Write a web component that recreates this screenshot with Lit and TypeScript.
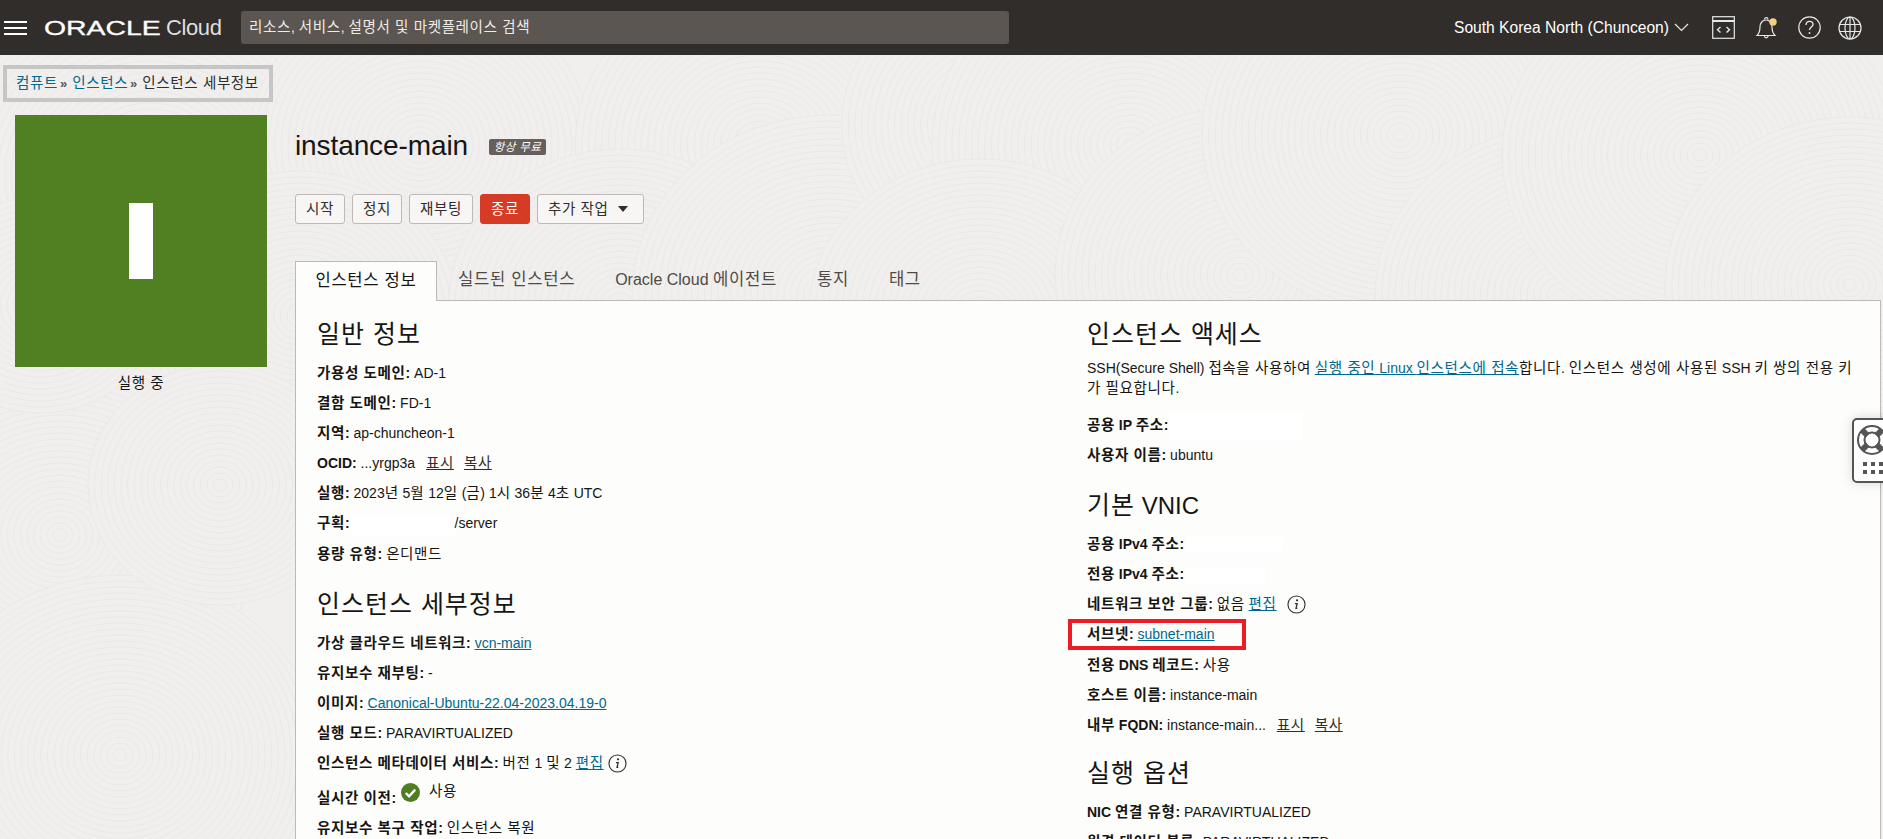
import { LitElement, html, css, svg } from "lit";
import { customElement } from "lit/decorators.js";

// Hangul runs get their own span: the CJK font's syllables are narrower than the reference's.
const k = (text: string) =>
  text.split(/([가-힣]+(?:\s+[가-힣]+)*)/).map((part, i) => (i % 2 ? html`<span class="ko">${part}</span>` : part));

const seeds: [number, number, number][] = [
  [150, 120, 34], [60, 480, 30], [420, 90, 26], [300, 260, 24], [760, 90, 28], [620, 250, 26], [830, 240, 30],
  [1000, 70, 24], [1130, 90, 30], [980, 260, 26], [1240, 220, 28], [1400, 80, 30], [1560, 240, 28], [1700, 100, 30],
  [1850, 230, 28], [120, 700, 30], [220, 430, 20], [40, 250, 18],
];
const texture = seeds.map(([cx, cy, n]) =>
  Array.from({ length: n }, (_, i) => {
    const r = (n - i) * 6;
    return svg`<ellipse cx=${cx} cy=${cy} rx=${r * 1.1} ry=${r} />`;
  })
);

const info = html`<svg class="info" viewBox="0 0 20 20"><circle cx="10" cy="10" r="9" fill="none" stroke="#333" stroke-width="1.2"/><circle cx="10.6" cy="5.6" r="1.2" fill="#333"/><path d="M8.4 9h2.3l-1.2 5h1.4" fill="none" stroke="#333" stroke-width="1.4"/></svg>`;

@customElement("app-root")
export class AppRoot extends LitElement {
  static styles = css`
    :host { display: block; position: relative; width: 1883px; height: 839px; overflow: hidden; background: #f0efed; font-family: "Liberation Sans", "Noto Sans CJK KR", sans-serif; font-size: 14px; color: #161513; }
    .ko { font-size: 1.04em; letter-spacing: .041em; }
    a { color: #00688c; text-decoration: underline; }
    .texture { position: absolute; left: 0; top: 55px; width: 1883px; height: 784px; fill: #f0efed; stroke: #ebe9e7; stroke-width: 1; }
    header { position: relative; height: 55px; background: #312d2a; color: #fff; display: flex; align-items: center; box-sizing: border-box; padding-left: 4px; }
    .burger { width: 23px; height: 14px; display: flex; flex-direction: column; justify-content: space-between; margin-top: 1px; }
    .burger i { display: block; height: 2px; background: #fff; }
    .logo { margin-left: 17px; width: 180px; display: flex; align-items: baseline; white-space: nowrap; color: #fff; }
    .logo b { font-weight: 400; font-size: 20px; transform: scaleX(1.42); transform-origin: left; width: 122px; -webkit-text-stroke: 0.3px #fff; }
    .logo span { font-size: 22px; letter-spacing: -0.4px; color: #dedede; }
    .search { margin-left: 17px; width: 768px; height: 33px; background: #5b5652; border-radius: 3px; box-sizing: border-box; padding-left: 8px; line-height: 33px; color: #efece8; }
    .region { margin-left: auto; font-size: 15.6px; white-space: nowrap; }
    .chev { margin-left: 5px; width: 15px; height: 9px; }
    .hicons { display: flex; align-items: center; margin-left: 23px; width: 171px; flex: none; }
    .hicons svg { flex: none; fill: none; stroke: #e8e8e8; stroke-width: 1.2; }
    .hicons .bell { margin-left: 21px; }
    .hicons .q { margin-left: 21px; }
    .hicons .globe { margin-left: 17px; }
    main { position: relative; }
    .crumb { position: absolute; left: 3px; top: 10px; width: 270px; height: 37px; box-sizing: border-box; border: 4px solid #c6c6c6; padding-left: 9px; line-height: 28px; white-space: nowrap; color: #312d2a; }
    .crumb a { text-decoration: none; }
    .crumb .sep { font-size: 13px; font-weight: 700; margin: 0 5px 0 2px; color: #555; }
    .layout { display: flex; padding: 60px 2px 0 15px; }
    .side { width: 252px; flex: none; margin-right: 28px; }
    .tile { height: 252px; background: #518023; display: flex; align-items: center; justify-content: center; }
    .tile i { display: block; width: 24px; height: 76px; background: #fff; }
    .status { text-align: center; margin-top: 7px; line-height: 18px; }
    .body { flex: 1; min-width: 0; }
    .title { display: flex; align-items: center; height: 60px; padding-top: 1px; box-sizing: border-box; }
    h1 { margin: 0; font-weight: 400; font-size: 28px; letter-spacing: -0.1px; }
    .badge { margin-left: 21px; background: #665f5b; color: #fff; font-size: 11px; height: 16px; line-height: 16px; width: 57px; text-align: center; border-radius: 2px; font-style: italic; margin-top: 2px; white-space: nowrap; }
    .btns { display: flex; gap: 7px; margin-top: 19px; }
    .btn { box-sizing: border-box; height: 30px; line-height: 28px; border: 1px solid #bcb9b6; border-radius: 3px; background: #f7f6f5; text-align: center; color: #312d2a; width: 50px; white-space: nowrap; }
    .btn.w { width: 64px; }
    .btn.danger { background: #d63b25; border-color: #d63b25; color: #fff; }
    .btn.more { width: 107px; text-align: left; padding-left: 10px; }
    .caret { display: inline-block; border: 5px solid transparent; border-top: 6px solid #312d2a; border-bottom: 0; margin-left: 9px; vertical-align: 2px; }
    .tabs { display: flex; margin-top: 37px; height: 39px; font-size: 16px; color: #4f4a46; position: relative; z-index: 1; }
    .tab { line-height: 38px; white-space: nowrap; margin-left: 40px; }
    .tab.first { margin-left: 21px; }
    .tab.active { margin: 0; width: 142px; box-sizing: border-box; height: 40px; border: 1px solid #bcb9b6; border-bottom: 0; background: #fdfdfb; text-align: center; color: #161513; }
    .panel { border: 1px solid #bcb9b6; background: #fdfdfb; height: 560px; box-sizing: border-box; padding: 13px 22px 0 21px; display: grid; grid-template-columns: 770px 1fr; }
    h2 { margin: 0 0 4px; font-weight: 400; font-size: 24px; line-height: 40px; height: 40px; color: #161513; white-space: nowrap; }
    .row { height: 30.1px; line-height: 30px; white-space: nowrap; }
    .row a { margin-right: 10px; }
    .row a.mono { color: #312d2a; }
    .row a.first { margin-left: 7px; }
    .row a.edit { margin-right: 4px; }
    .row.tall { height: 35px; padding-top: 5px; box-sizing: border-box; }
    .mask { display: inline-block; background: #fff; vertical-align: middle; }
    .m1 { width: 105px; height: 20px; margin: 0 -1px 0 -3px; }
    .m2 { width: 132px; height: 29px; margin-left: 2px; }
    .m3 { width: 97px; height: 16px; margin-left: 2px; }
    .m4 { width: 79px; height: 16px; margin-left: 2px; }
    .info { width: 19px; height: 19px; vertical-align: -5px; }
    .check { width: 19px; height: 19px; vertical-align: 1px; margin: 0 4px 0 1px; }
    .up { position: relative; top: -7px; margin-left: 5px; }
    .s2 { margin-top: 15px; }
    .para { line-height: 20px; height: 40px; margin: 0 0 12px; width: 770px; }
    .s3 { margin-top: 15px; }
    .s4 { margin-top: 13px; }
    .boxed { outline: 4px solid #ed1c24; outline-offset: -4px; margin-left: -19px; padding-left: 19px; width: 159px; }
    .help { position: absolute; left: 1852px; top: 418px; width: 40px; height: 65px; box-sizing: border-box; border: 2px solid #555; border-radius: 5px; background: #fff; box-shadow: 0 0 12px rgba(0,0,0,.15); }
    .help svg { display: block; }
  `;

  render() {
    return html`
      <svg class="texture">${texture}</svg>
      <header>
        <div class="burger"><i></i><i></i><i></i></div>
        <div class="logo"><b>ORACLE</b><span>Cloud</span></div>
        <div class="search">${k("리소스, 서비스, 설명서 및 마켓플레이스 검색")}</div>
        <div class="region">South Korea North (Chunceon)</div>
        <svg class="chev" viewBox="0 0 15 9" fill="none" stroke="#e8e8e8" stroke-width="1.2"><path d="M1 1l6.5 6.5L14 1"/></svg>
        <div class="hicons">
          <svg width="23" height="23" viewBox="0 0 23 23"><rect x=".7" y=".7" width="21.6" height="21.6"/><path d="M.7 5h21.6" stroke-width="2"/><path d="M8.500 11l-3 2.700 3 2.700M14.500 11l3 2.700-3 2.700" stroke-width="1.400"/></svg>
          <svg class="bell" width="21" height="23" viewBox="0 0 21 23"><path d="M1 19.500c2.500-2.500 3-5 3-8.500 0-4 2.500-7 6-7 3.500 0 6 3 6 7 0 3.500.5 6 3 8.500z"/><path d="M8.500 20c0 2.500 3.500 2.500 3.500 0M8.500 3.500c0-2.500 3.500-2.500 3.500 0"/><circle cx="17" cy="6" r="3.700" fill="#f3d080" stroke="none"/></svg>
          <svg class="q" width="23" height="23" viewBox="0 0 23 23"><circle cx="11.500" cy="11.500" r="10.700"/><path d="M8 9c0-5 7-4.500 7-.5 0 2.500-3.500 2.500-3.500 5.500" stroke-width="1.400"/><circle cx="11.500" cy="17" r=".9" fill="#e8e8e8" stroke="none"/></svg>
          <svg class="globe" width="24" height="24" viewBox="0 0 24 24"><circle cx="12" cy="12" r="11"/><ellipse cx="12" cy="12" rx="5" ry="11"/><path d="M12 1v22M1.500 8.500h21M1.500 15.500h21"/></svg>
        </div>
      </header>
      <main>
        <div class="crumb"><a>${k("컴퓨트")}</a><span class="sep">»</span><a>${k("인스턴스")}</a><span class="sep">»</span>${k("인스턴스 세부정보")}</div>
        <div class="layout">
          <div class="side">
            <div class="tile"><i></i></div>
            <div class="status">${k("실행 중")}</div>
          </div>
          <div class="body">
            <div class="title"><h1>instance-main</h1><span class="badge">${k("항상 무료")}</span></div>
            <div class="btns">
              <div class="btn">${k("시작")}</div><div class="btn">${k("정지")}</div><div class="btn w">${k("재부팅")}</div><div class="btn danger">${k("종료")}</div>
              <div class="btn more">${k("추가 작업")}<span class="caret"></span></div>
            </div>
            <div class="tabs">
              <div class="tab active">${k("인스턴스 정보")}</div>
              <div class="tab first">${k("실드된 인스턴스")}</div>
              <div class="tab">${k("Oracle Cloud 에이전트")}</div>
              <div class="tab">${k("통지")}</div>
              <div class="tab">${k("태그")}</div>
            </div>
            <div class="panel">
              <div>
                <h2>${k("일반 정보")}</h2>
                <div class="row"><b>${k("가용성 도메인")}:</b> AD-1</div>
                <div class="row"><b>${k("결함 도메인")}:</b> FD-1</div>
                <div class="row"><b>${k("지역")}:</b> ap-chuncheon-1</div>
                <div class="row"><b>OCID:</b> ...yrgp3a <a class="mono first">${k("표시")}</a><a class="mono">${k("복사")}</a></div>
                <div class="row"><b>${k("실행")}:</b> ${k("2023년 5월 12일 (금) 1시 36분 4초 UTC")}</div>
                <div class="row"><b>${k("구획")}:</b> <span class="mask m1"></span>/server</div>
                <div class="row"><b>${k("용량 유형")}:</b> ${k("온디맨드")}</div>
                <h2 class="s2">${k("인스턴스 세부정보")}</h2>
                <div class="row"><b>${k("가상 클라우드 네트워크")}:</b> <a>vcn-main</a></div>
                <div class="row"><b>${k("유지보수 재부팅")}:</b> -</div>
                <div class="row"><b>${k("이미지")}:</b> <a>Canonical-Ubuntu-22.04-2023.04.19-0</a></div>
                <div class="row"><b>${k("실행 모드")}:</b> PARAVIRTUALIZED</div>
                <div class="row"><b>${k("인스턴스 메타데이터 서비스")}:</b> ${k("버전 1 및 2")} <a class="edit">${k("편집")}</a>${info}</div>
                <div class="row tall"><b>${k("실시간 이전")}:</b> <svg class="check" viewBox="0 0 20 20"><circle cx="10" cy="10" r="10" fill="#4f7d23"/><path d="M5 10.500l3.500 3.500L15 7" fill="none" stroke="#fff" stroke-width="2.500"/></svg><span class="up">${k("사용")}</span></div>
                <div class="row"><b>${k("유지보수 복구 작업")}:</b> ${k("인스턴스 복원")}</div>
              </div>
              <div>
                <h2>${k("인스턴스 액세스")}</h2>
                <div class="para">${k("SSH(Secure Shell) 접속을 사용하여 ")}<a>${k("실행 중인 Linux 인스턴스에 접속")}</a>${k("합니다. 인스턴스 생성에 사용된 SSH 키 쌍의 전용 키가 필요합니다.")}</div>
                <div class="row"><b>${k("공용 IP 주소")}:</b><span class="mask m2"></span></div>
                <div class="row"><b>${k("사용자 이름")}:</b> ubuntu</div>
                <h2 class="s3">${k("기본 VNIC")}</h2>
                <div class="row"><b>${k("공용 IPv4 주소")}:</b><span class="mask m3"></span></div>
                <div class="row"><b>${k("전용 IPv4 주소")}:</b><span class="mask m4"></span></div>
                <div class="row"><b>${k("네트워크 보안 그룹")}:</b> ${k("없음")} <a>${k("편집")}</a>${info}</div>
                <div class="row boxed"><b>${k("서브넷")}:</b> <a>subnet-main</a></div>
                <div class="row"><b>${k("전용 DNS 레코드")}:</b> ${k("사용")}</div>
                <div class="row"><b>${k("호스트 이름")}:</b> instance-main</div>
                <div class="row"><b>${k("내부 FQDN")}:</b> instance-main... <a class="mono first">${k("표시")}</a><a class="mono">${k("복사")}</a></div>
                <h2 class="s4">${k("실행 옵션")}</h2>
                <div class="row"><b>${k("NIC 연결 유형")}:</b> PARAVIRTUALIZED</div>
                <div class="row"><b>${k("원격 데이터 볼륨")}:</b> PARAVIRTUALIZED</div>
              </div>
            </div>
          </div>
        </div>
      </main>
      <div class="help">
        <svg width="36" height="61" viewBox="0 0 36 61" fill="none">
          <circle cx="18" cy="20" r="14" stroke="#555" stroke-width="2"/>
          <circle cx="18" cy="20" r="7.500" stroke="#555" stroke-width="2"/>
          <path d="M8 10l5.500 5.500M28 10l-5.500 5.500M8 30l5.500-5.500M28 30l-5.500-5.500" stroke="#555" stroke-width="6"/>
          <g fill="#555"><rect x="9" y="42" width="4" height="4"/><rect x="17" y="42" width="4" height="4"/><rect x="25" y="42" width="4" height="4"/><rect x="9" y="50" width="4" height="4"/><rect x="17" y="50" width="4" height="4"/><rect x="25" y="50" width="4" height="4"/></g>
        </svg>
      </div>
    `;
  }
}
